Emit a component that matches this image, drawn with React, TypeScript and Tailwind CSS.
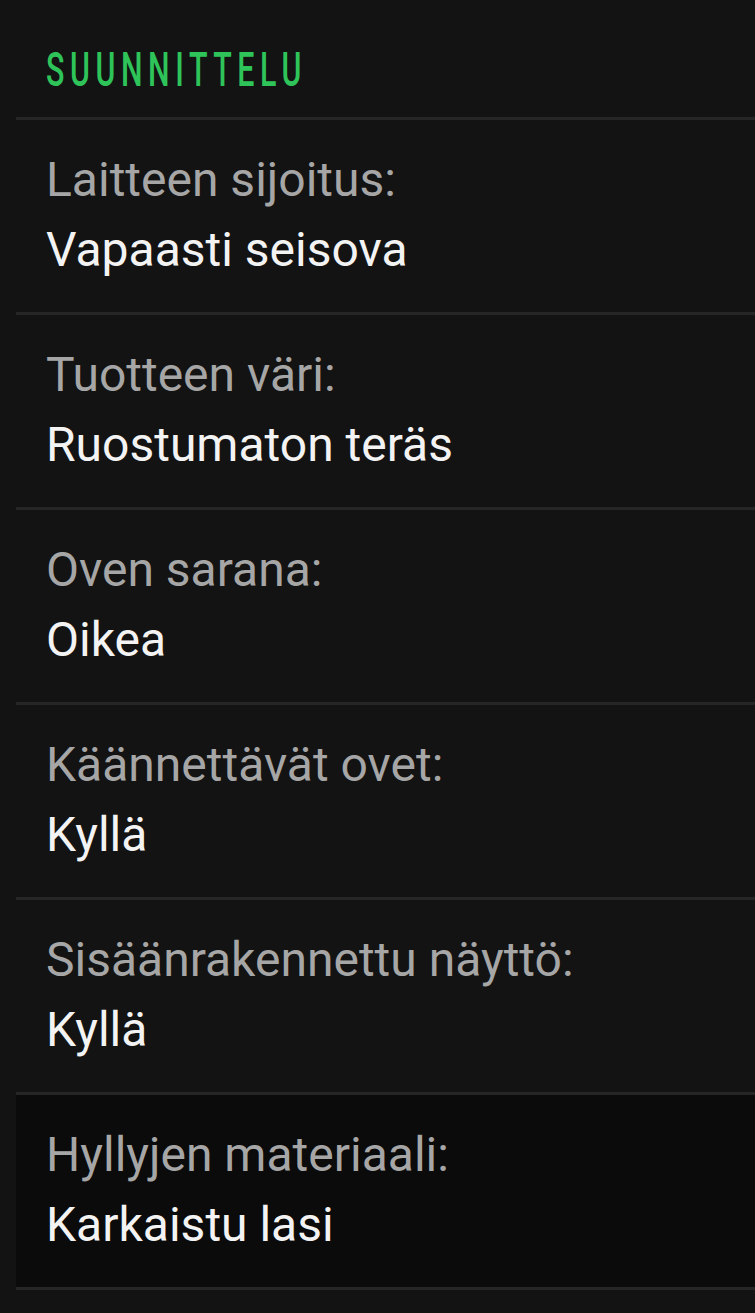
const rows = [
  { label: "Laitteen sijoitus:", value: "Vapaasti seisova" },
  { label: "Tuotteen väri:", value: "Ruostumaton teräs" },
  { label: "Oven sarana:", value: "Oikea" },
  { label: "Käännettävät ovet:", value: "Kyllä" },
  { label: "Sisäänrakennettu näyttö:", value: "Kyllä" },
  { label: "Hyllyjen materiaali:", value: "Karkaistu lasi", active: true },
];

export default function App() {
  return (
    <div className="min-h-[1313px] w-[755px] bg-[#131313] font-['Roboto','Noto_Sans',sans-serif]">
      <div className="pl-[46px] pt-[35px] pb-[12px]">
        <h2 className="origin-left scale-x-[0.62] whitespace-nowrap text-[49px] font-medium leading-[70px] tracking-[9px] text-[#2fc45a]">
          SUUNNITTELU
        </h2>
      </div>
      <div className="ml-4 border-t-[3px] border-[#262626]">
        {rows.map((r) => (
          <div
            key={r.label}
            className={
              r.active
                ? "border-b-[3px] border-[#262626] bg-[#0b0b0b] pl-[30px] pt-[25px] pb-[27px]"
                : "border-b-[3px] border-[#262626] pl-[30px] pt-[25px] pb-[27px]"
            }
          >
            <div className="text-[48px] leading-[70px] text-[#a6a6a6]">{r.label}</div>
            <div className="text-[48px] leading-[70px] text-[#f3f3f3]">{r.value}</div>
          </div>
        ))}
      </div>
    </div>
  );
}
